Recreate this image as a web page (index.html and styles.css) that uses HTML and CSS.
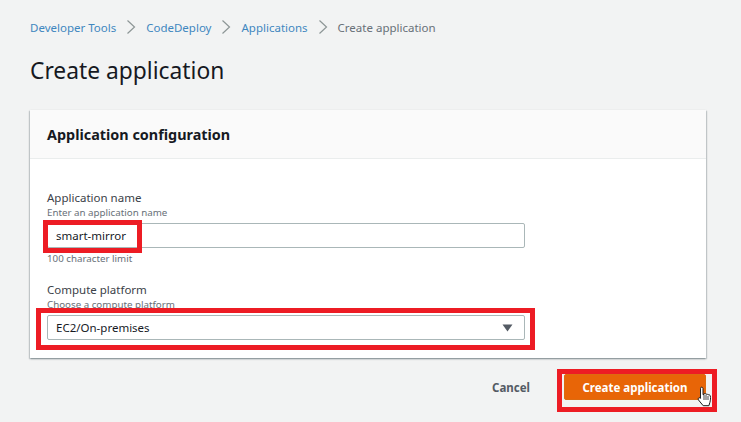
FILE: index.html
```html
<!DOCTYPE html>
<html lang="en">
<head>
<meta charset="utf-8">
<title>Create application</title>
<link rel="stylesheet" href="styles.css">
</head>
<body>
<main class="page">
  <nav class="crumbs">
    <a class="crumb">Developer Tools</a>
    <svg class="sep" width="10" height="16" viewBox="0 0 10 16"><path d="M1.500 1.500 8.500 8l-7 6.500" fill="none" stroke="#8d9696" stroke-width="1.200"/></svg>
    <a class="crumb">CodeDeploy</a>
    <svg class="sep" width="10" height="16" viewBox="0 0 10 16"><path d="M1.500 1.500 8.500 8l-7 6.500" fill="none" stroke="#8d9696" stroke-width="1.200"/></svg>
    <a class="crumb">Applications</a>
    <svg class="sep" width="10" height="16" viewBox="0 0 10 16"><path d="M1.500 1.500 8.500 8l-7 6.500" fill="none" stroke="#8d9696" stroke-width="1.200"/></svg>
    <span class="crumb-current">Create application</span>
  </nav>
  <h1 class="title">Create application</h1>
  <section class="card">
    <header class="card-head"><h2 class="card-title">Application configuration</h2></header>
    <div class="card-body">
      <div class="field field-name">
        <div class="label">Application name</div>
        <div class="hint">Enter an application name</div>
        <div class="control">smart-mirror<span class="mark mark-name"></span></div>
        <div class="hint hint-below">100 character limit</div>
      </div>
      <div class="field">
        <div class="label">Compute platform</div>
        <div class="hint">Choose a compute platform</div>
        <div class="control control-select">EC2/On-premises
          <svg class="caret" width="11" height="8" viewBox="0 0 11 8"><path d="M0.500 0.500h10L5.500 7.500z" fill="#545b64"/></svg>
          <span class="mark mark-platform"></span>
        </div>
      </div>
    </div>
  </section>
  <div class="actions">
    <button class="cancel">Cancel</button>
    <button class="primary">Create application<span class="mark mark-button"></span>
      <svg class="cursor" width="16" height="22" viewBox="0 0 16 22"><path d="M4.500 1.200c1 0 1.500.6 1.500 1.500v6l1-.2V7.800c.9-.5 1.600-.3 2 .5.900-.4 1.600-.2 2 .6.900-.4 2-.1 2.300 1 .4 2 .2 4.500-.4 6.500l-1 3.300H6.200L1.500 14c-.6-1-.2-2 .6-2.200.7-.2 1.300.1 1.400.6V2.700c0-.9.300-1.500 1-1.500z" fill="#fff" stroke="#1b1b1b" stroke-width="1"/><path d="M7 9v5M9 9v5M11 10v4" stroke="#1b1b1b" stroke-width=".8" fill="none"/></svg>
    </button>
  </div>
</main>
</body>
</html>
```
FILE: styles.css
```css
* { box-sizing: border-box; }
html, body { margin: 0; height: 100%; }
body {
  background: #f2f3f3;
  font-family: "Noto Sans", "Open Sans", sans-serif;
  color: #16191f;
  overflow: hidden;
}
.page { width: 741px; height: 422px; padding: 19px 35px 0 30px; }
.crumbs { display: flex; align-items: center; height: 16px; font-size: 11.500px; }
.crumb { color: #3f87bf; }
.crumb-current { color: #687078; }
.sep { margin: 0 10px; }
.title { margin: 19px 0 0; font-size: 22.800px; line-height: 34px; font-weight: 400; color: #16191f; }
.card {
  margin-top: 22px;
  height: 248px;
  background: #fff;
  box-shadow: 0 1px 2px rgba(0, 28, 36, .3), 1px 1px 1px rgba(0, 28, 36, .12), -1px 1px 1px rgba(0, 28, 36, .12);
}
.card-head { height: 49px; padding: 0 17px; display: flex; align-items: center; background: #fafafa; border-bottom: 1px solid #eaeded; }
.card-title { margin: 0; font-size: 14.400px; font-weight: 700; color: #16191f; }
.card-body { padding: 31px 181px 0 17px; }
.field-name { margin-bottom: 17px; }
.label { font-size: 11.500px; line-height: 16px; color: #3b4148; }
.hint { font-size: 9.750px; line-height: 13px; color: #687078; }
.hint-below { margin-top: 4px; }
.control {
  position: relative;
  height: 25px;
  margin-top: 4px;
  padding: 0 8px;
  display: flex;
  align-items: center;
  background: #fff;
  border: 1px solid #aab7b8;
  border-radius: 2px;
  font-size: 11.500px;
  color: #16191f;
}
.control-select { justify-content: space-between; }
.caret { margin-right: 3px; }
.mark { position: absolute; border: 5px solid #ed1c24; pointer-events: none; }
.mark-name { left: -5px; top: -4px; width: 99px; height: 33px; }
.mark-platform { left: -12px; top: -8px; width: 499px; height: 42px; }
.mark-button { left: -8px; top: -6px; width: 160px; height: 43px; }
.actions { display: flex; justify-content: flex-end; align-items: center; margin-top: 16px; }
.cancel { border: 0; background: none; padding: 0; margin-right: 34px; font: 700 11.500px "Noto Sans", sans-serif; color: #545b64; }
.primary {
  position: relative;
  width: 142px;
  height: 26px;
  padding: 0;
  border: 1px solid #dd6b10;
  border-radius: 2px;
  background: #e86507;
  color: #fff;
  font: 700 11.500px "Noto Sans", sans-serif;
}
.cursor { position: absolute; left: 132px; top: 11px; }
```
